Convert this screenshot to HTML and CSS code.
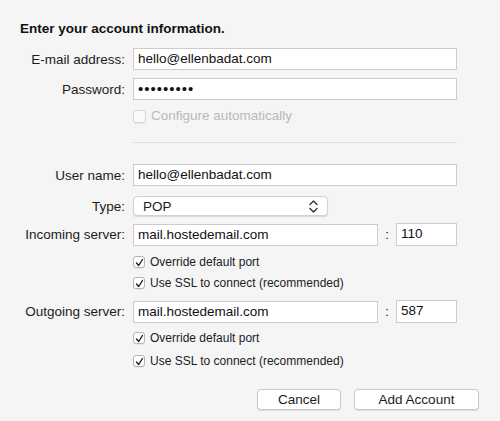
FILE: index.html
```html
<!DOCTYPE html>
<html lang="en">

<head>
    <title>Add Account</title>
    <meta charset="utf-8">
    <link rel="stylesheet" href="styles.css">
</head>

<body>
    <div class="sheet">
        <h1 class="title">Enter your account information.</h1>

        <div class="row first">
            <label class="label">E-mail address:</label>
            <div class="field wide">hello@ellenbadat.com</div>
        </div>
        <div class="row gap8">
            <label class="label">Password:</label>
            <div class="field wide dots">&#8226;&#8226;&#8226;&#8226;&#8226;&#8226;&#8226;&#8226;&#8226;</div>
        </div>
        <div class="row gap9">
            <span class="label"></span>
            <div class="check disabled">
                <span class="box"></span>
                <span>Configure automatically</span>
            </div>
        </div>

        <div class="row sep-row">
            <span class="label"></span>
            <div class="sep"></div>
        </div>

        <div class="row gap21">
            <label class="label">User name:</label>
            <div class="field wide">hello@ellenbadat.com</div>
        </div>
        <div class="row gap10">
            <label class="label">Type:</label>
            <div class="select">
                <span>POP</span>
                <svg class="arrows" width="9" height="13" viewBox="0 0 9 13">
                    <path d="M1 4.5 L4.5 1 L8 4.5 M1 8.5 L4.5 12 L8 8.5" fill="none" stroke="#333" stroke-width="1.4" stroke-linecap="round" stroke-linejoin="round"/>
                </svg>
            </div>
        </div>
        <div class="row gap7">
            <label class="label">Incoming server:</label>
            <div class="field server">mail.hostedemail.com</div>
            <span class="colon">:</span>
            <div class="field port">110</div>
        </div>
        <div class="row gap9">
            <span class="label"></span>
            <div class="check small">
                <span class="box"><svg width="9" height="9" viewBox="0 0 9 9"><path d="M1.5 5 L3.7 7.5 L7.5 1.5" fill="none" stroke="#222" stroke-width="1.4" stroke-linecap="round" stroke-linejoin="round"/></svg></span>
                <span>Override default port</span>
            </div>
        </div>
        <div class="row gap7">
            <span class="label"></span>
            <div class="check small">
                <span class="box"><svg width="9" height="9" viewBox="0 0 9 9"><path d="M1.5 5 L3.7 7.5 L7.5 1.5" fill="none" stroke="#222" stroke-width="1.4" stroke-linecap="round" stroke-linejoin="round"/></svg></span>
                <span>Use SSL to connect (recommended)</span>
            </div>
        </div>

        <div class="row gap10">
            <label class="label">Outgoing server:</label>
            <div class="field server">mail.hostedemail.com</div>
            <span class="colon">:</span>
            <div class="field port">587</div>
        </div>
        <div class="row gap8">
            <span class="label"></span>
            <div class="check small">
                <span class="box"><svg width="9" height="9" viewBox="0 0 9 9"><path d="M1.5 5 L3.7 7.5 L7.5 1.5" fill="none" stroke="#222" stroke-width="1.4" stroke-linecap="round" stroke-linejoin="round"/></svg></span>
                <span>Override default port</span>
            </div>
        </div>
        <div class="row gap9">
            <span class="label"></span>
            <div class="check small">
                <span class="box"><svg width="9" height="9" viewBox="0 0 9 9"><path d="M1.5 5 L3.7 7.5 L7.5 1.5" fill="none" stroke="#222" stroke-width="1.4" stroke-linecap="round" stroke-linejoin="round"/></svg></span>
                <span>Use SSL to connect (recommended)</span>
            </div>
        </div>

        <div class="buttons">
            <button class="btn cancel">Cancel</button>
            <button class="btn add">Add Account</button>
        </div>
    </div>
</body>

</html>
```

FILE: styles.css
```css
* {
    box-sizing: border-box;
}

body {
    margin: 0;
    background: #f5f5f5;
    font-family: "Liberation Sans", Arial, sans-serif;
    color: #1c1c1c;
}

.sheet {
    width: 500px;
    height: 421px;
    padding-top: 21px;
}

/* Heading */
.title {
    margin: 0 0 0 20px;
    font-size: 13.5px;
    line-height: 16px;
    font-weight: bold;
    color: #111;
}

/* Label + field rows */
.row {
    display: flex;
    align-items: center;
}

.first { margin-top: 11px; }
.gap7 { margin-top: 7px; }
.gap8 { margin-top: 8px; }
.gap9 { margin-top: 9px; }
.gap10 { margin-top: 10px; }
.gap21 { margin-top: 21px; }

.label {
    width: 125px;
    margin-right: 8px;
    text-align: right;
    font-size: 13.5px;
    flex-shrink: 0;
}

.field {
    height: 22px;
    padding: 0 4px;
    background: #fff;
    border: 1px solid #cdcdcd;
    font-size: 13.5px;
    line-height: 20px;
    color: #111;
    white-space: nowrap;
    overflow: hidden;
}

.wide {
    width: 324px;
}

.dots {
    font-size: 15px;
    letter-spacing: 1px;
}

.server {
    width: 245px;
}

.colon {
    width: 18px;
    text-align: center;
    font-size: 13px;
}

.port {
    width: 61px;
    height: 23px;
}

/* Popup button */
.select {
    width: 195px;
    height: 20px;
    padding: 0 9px 0 9px;
    display: flex;
    align-items: center;
    justify-content: space-between;
    background: #fff;
    border: 1px solid #d2d2d2;
    border-radius: 4px;
    box-shadow: 0 1px 1px rgba(0, 0, 0, 0.12);
    font-size: 13.5px;
}

/* Checkboxes */
.check {
    display: flex;
    align-items: center;
    gap: 5px;
    line-height: 14px;
}

.check.small {
    font-size: 12px;
}

.check.disabled {
    font-size: 13.5px;
    color: #b9b9b9;
}

.box {
    width: 12px;
    height: 12px;
    display: flex;
    align-items: center;
    justify-content: center;
    background: #fff;
    border: 1px solid #b4b4b4;
    border-radius: 3px;
    box-shadow: 0 1px 0 rgba(0, 0, 0, 0.06);
}

.disabled .box {
    width: 13px;
    height: 13px;
    border-color: #d6d6d6;
    background: #fafafa;
}

/* Separator */
.sep-row {
    margin-top: 19px;
}

.sep {
    width: 324px;
    height: 1px;
    background: #dedede;
}

/* Bottom buttons */
.buttons {
    display: flex;
    justify-content: flex-end;
    gap: 13px;
    margin-top: 21px;
    padding-right: 21px;
}

.btn {
    height: 21px;
    padding: 0;
    background: #fff;
    border: 1px solid #c9c9c9;
    border-radius: 4px;
    box-shadow: 0 1px 1px rgba(0, 0, 0, 0.1);
    font-family: "Liberation Sans", Arial, sans-serif;
    font-size: 13.5px;
    color: #1c1c1c;
}

.cancel {
    width: 84px;
}

.add {
    width: 125px;
}
```
